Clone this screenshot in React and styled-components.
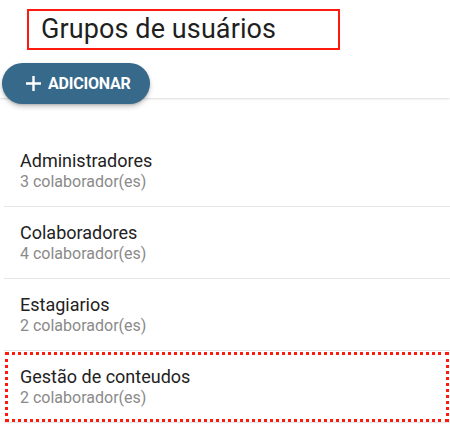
import styled, { createGlobalStyle } from 'styled-components';

const GlobalStyle = createGlobalStyle`
  body {
    margin: 0;
    background: #fff;
    font-family: Roboto, "Liberation Sans", sans-serif;
  }
`;

const Page = styled.div`
  width: 450px;
  height: 425px;
  overflow: hidden;
  background: #fff;
`;

const Header = styled.header`
  height: 98px;
  box-sizing: border-box;
  padding: 9px 0 0 2px;
  display: flex;
  flex-direction: column;
  align-items: flex-start;
  gap: 13px;
  box-shadow: 0 1px 2px rgba(0, 0, 0, 0.14);
  position: relative;
`;

const TitleBox = styled.div`
  flex-shrink: 0;
  margin-left: 25px;
  width: 313px;
  height: 41px;
  box-sizing: border-box;
  border: 2px solid #ff1a0f;
  padding: 0 0 0 12px;
  display: flex;
  align-items: center;
`;

const Title = styled.h1`
  margin: 0 0 2px;
  font-size: 27px;
  font-weight: 400;
  color: #1f1f1f;
  letter-spacing: 0.1px;
`;

const AddButton = styled.button`
  flex-shrink: 0;
  position: relative;
  z-index: 1;
  height: 41px;
  width: 148px;
  border: none;
  border-radius: 21px;
  background: #37698b;
  color: #fff;
  display: flex;
  align-items: center;
  gap: 6px;
  padding: 0 0 0 23px;
  font-family: Roboto, "Liberation Sans", sans-serif;
  font-size: 16px;
  font-weight: 700;
  letter-spacing: -0.2px;
  box-shadow: 0 3px 5px rgba(0, 0, 0, 0.2), 0 1px 2px rgba(0, 0, 0, 0.15);
  cursor: pointer;
`;

const List = styled.ul`
  list-style: none;
  margin: 37px 0 0 4px;
  padding: 0;
`;

const Row = styled.li`
  height: 72px;
  box-sizing: border-box;
  border-bottom: 1px solid #e6e6e6;
  padding: 0 0 0 16px;
  display: flex;
  flex-direction: column;
  justify-content: center;
  outline: ${({ $selected }) => ($selected ? '3px dotted #ff1a0f' : 'none')};
  outline-offset: -4px;
`;

const Name = styled.span`
  font-size: 18px;
  color: #222;
  line-height: 22px;
`;

const Count = styled.span`
  font-size: 16px;
  color: #8a8a8a;
  line-height: 19px;
`;

const PlusIcon = () => (
  <svg width="17" height="17" viewBox="0 0 17 17">
    <path d="M8.5 1v15M1 8.5h15" stroke="#fff" strokeWidth="2.4" />
  </svg>
);

const groups = [
  { name: 'Administradores', count: 3 },
  { name: 'Colaboradores', count: 4 },
  { name: 'Estagiarios', count: 2 },
  { name: 'Gestão de conteudos', count: 2, selected: true },
];

const App = () => (
  <Page>
    <GlobalStyle />
    <Header>
      <TitleBox>
        <Title>Grupos de usuários</Title>
      </TitleBox>
      <AddButton>
        <PlusIcon />
        ADICIONAR
      </AddButton>
    </Header>
    <List>
      {groups.map((g) => (
        <Row key={g.name} $selected={g.selected}>
          <Name>{g.name}</Name>
          <Count>{g.count} colaborador(es)</Count>
        </Row>
      ))}
    </List>
  </Page>
);

export default App;
